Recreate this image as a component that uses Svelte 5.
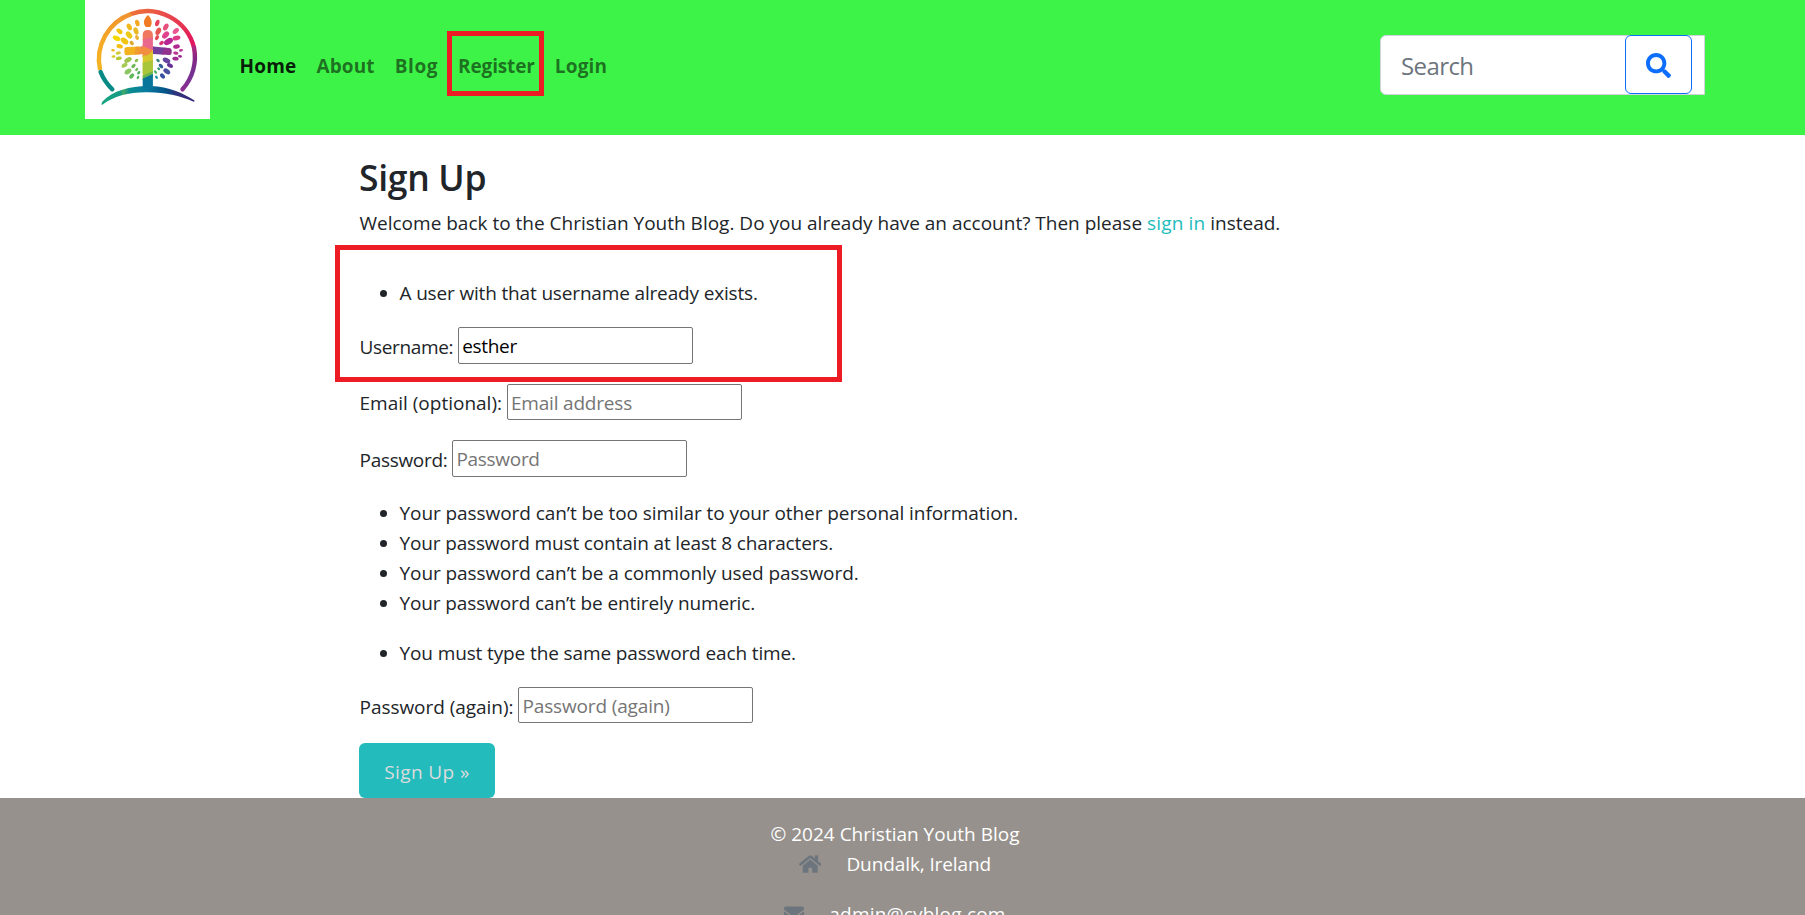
<script>
  const nav = [
    { label: 'Home', spacing: 0.2, active: true },
    { label: 'About', spacing: 0.1 },
    { label: 'Blog', spacing: 0.6 },
    { label: 'Register', spacing: -0.15, marked: true },
    { label: 'Login', spacing: 0.2 }
  ];

  const rules = [
    { text: 'Your password can’t be too similar to your other personal information.', spacing: -0.07 },
    { text: 'Your password must contain at least 8 characters.', spacing: -0.15 },
    { text: 'Your password can’t be a commonly used password.', spacing: -0.08 },
    { text: 'Your password can’t be entirely numeric.', spacing: -0.12 }
  ];

  // x, y, half-length, half-width, rotation, colour
  const leaves = [
    [52.3, 23, 3.3, 2.2, 75, '#f5a623'],
    [44.3, 27, 3.6, 2.3, 60, '#f0b81e'],
    [51, 31, 3.8, 2.4, 70, '#eab92a'],
    [34.5, 31.3, 3.4, 2.2, 40, '#f2c50c'],
    [44, 35, 4, 2.6, 50, '#edc81a'],
    [52, 37.5, 2.6, 1.8, 65, '#eeb034'],
    [31.5, 38.3, 4, 2.4, 25, '#f5d800'],
    [39.5, 41, 4.3, 2.7, 38, '#f0c414'],
    [46.7, 43, 2.4, 1.8, 45, '#dca92b'],
    [34.7, 46.3, 3.3, 2.1, 15, '#f3bd15'],
    [28, 50.3, 1.8, 1.2, 10, '#f1b722'],
    [33.3, 53, 2.6, 1.6, -10, '#cfc93a'],
    [28.5, 56.5, 2, 1.3, -5, '#d3c921'],
    [33.8, 58.3, 3, 1.8, -12, '#b5c934'],
    [43, 60, 4, 2.4, -28, '#a0c44c'],
    [51.5, 60.5, 2, 1.4, -45, '#86bd4b'],
    [39.5, 65.3, 3.2, 2, -30, '#a5cb54'],
    [48.5, 66, 2.6, 1.6, -45, '#6fb85a'],
    [43, 71.5, 3.8, 2.4, -35, '#8bc663'],
    [51.7, 69.5, 1.8, 1.3, -50, '#72bb5a'],
    [46.7, 76, 3, 1.9, -50, '#62b85d'],
    [53.8, 72.7, 1.9, 1.3, -50, '#4aaf5c'],
    [53, 77.5, 1.8, 1.2, -60, '#51b45d'],
    [72.3, 23, 3.4, 2, -70, '#e94057'],
    [80.8, 27, 3.8, 2.3, -60, '#e5507d'],
    [73.3, 31.3, 4, 2.5, -65, '#e8574f'],
    [90.8, 31, 3.6, 2.3, -42, '#ea5790'],
    [80.6, 35, 4.2, 2.7, -48, '#df438c'],
    [72, 37.7, 2.7, 1.8, -60, '#e14c56'],
    [91.5, 38, 4, 2.3, -15, '#df3a85'],
    [83.5, 41.5, 4.8, 3, -30, '#b72594'],
    [76.5, 43, 2.6, 1.9, -35, '#d83579'],
    [91.5, 46.6, 3.4, 2.1, -12, '#b32992'],
    [96, 50.3, 2, 1.3, -10, '#b8369b'],
    [90.8, 53.2, 2.6, 1.6, 8, '#bd3390'],
    [95, 56.4, 2, 1.3, 8, '#9b278f'],
    [90.5, 58.6, 3.2, 1.9, 8, '#a12a91'],
    [81.5, 60.5, 4, 2.5, 25, '#6545a0'],
    [73, 60.5, 2, 1.4, 45, '#397f81'],
    [85, 65.5, 3.2, 2, 28, '#663298'],
    [76, 66, 2.7, 1.7, 45, '#325d92'],
    [81.8, 71.4, 3.8, 2.4, 35, '#4a51a1'],
    [73.7, 68.7, 1.6, 1.2, 50, '#2c9471'],
    [70.5, 72, 2, 1.3, 50, '#4caf65'],
    [77.5, 76, 3, 2, 50, '#374fa1'],
    [71.5, 77.3, 1.9, 1.2, 55, '#1795a3']
  ];
</script>

{#snippet field(label, hint, value, type, spacing, inner)}
  <div class="field">
    <label style:letter-spacing="{spacing}px"><span>{label}</span>
      <input {type} placeholder={hint} {value} style:letter-spacing="{inner}px" />
    </label>
  </div>
{/snippet}

<header>
  <a class="logo" href="#home" aria-label="Home">
    <svg viewBox="0 0 125 119" width="125" height="119">
      <defs>
        <linearGradient id="hill" x1="17" x2="109" y1="0" y2="0" gradientUnits="userSpaceOnUse">
          <stop offset="0" stop-color="#15a57f" />
          <stop offset=".2" stop-color="#139c87" />
          <stop offset=".23" stop-color="#45aa68" />
          <stop offset=".3" stop-color="#0a8d91" />
          <stop offset=".48" stop-color="#087b9e" />
          <stop offset=".7" stop-color="#045287" />
          <stop offset=".8" stop-color="#30347c" />
          <stop offset="1" stop-color="#39277c" />
        </linearGradient>
        <linearGradient id="ring" x1="48" x2="108" y1="12" y2="44" gradientUnits="userSpaceOnUse">
          <stop offset="0" stop-color="#ed7038" />
          <stop offset=".45" stop-color="#e84a4c" />
          <stop offset=".8" stop-color="#e52d53" />
          <stop offset="1" stop-color="#e11460" />
        </linearGradient>
        <linearGradient id="side" x1="0" x2="0" y1="45" y2="90" gradientUnits="userSpaceOnUse">
          <stop offset="0" stop-color="#bb247c" />
          <stop offset=".3" stop-color="#842884" />
          <stop offset=".65" stop-color="#743293" />
          <stop offset="1" stop-color="#8b2d91" />
        </linearGradient>
        <linearGradient id="west" x1="0" x2="0" y1="12" y2="70" gradientUnits="userSpaceOnUse">
          <stop offset="0" stop-color="#ef912f" />
          <stop offset=".5" stop-color="#f5a927" />
          <stop offset="1" stop-color="#f4b51f" />
        </linearGradient>
        <clipPath id="cross">
          <path d="M57.700 35q0-5 5-5t5.200 5v11.500l16.500 1.500q2.300.2 2.300 2.300v2.400q0 2.300-2.300 2.300l-16.500-1v34H57.700V54l-15.500 1.300q-2.800.2-2.800-2.500v-3q0-2.700 2.800-2.800l15.500-.5z" />
        </clipPath>
      </defs>
      <g fill="none" stroke-width="4.400">
        <path stroke="url(#west)" d="M15.100 70A48.300 48.300 0 0 1 46.500 13.800" />
        <path stroke="url(#ring)" d="M46 14A48.300 48.300 0 0 1 109 47.500" />
        <path stroke="url(#side)" stroke-linecap="round" d="M109 47.500A48.300 48.300 0 0 1 97.500 89.300" />
        <path stroke="#078a86" stroke-linecap="round" d="M15.600 72A48.300 48.300 0 0 0 27.300 89.300" />
      </g>
      <path fill="url(#hill)" d="M17 105c-.8-.5-.5-1.800.5-3.500C28 90 47 85.500 66 86c18 .7 32 7 43.500 14.400q.4 1-.8 1.300C94 95.500 79 92 61 92.300 43 92.600 29 96 17 105z" />
      <g clip-path="url(#cross)">
        <path fill="#f3b21f" d="M38 44h16v14H38z" />
        <path fill="#f19b2f" d="M51 44h10v14H49z" />
        <path fill="#ee7960" d="M56 28h13v12H56z" />
        <path fill="#e9688c" d="m56 40 13-3v13H56z" />
        <path fill="#f28e3f" d="M52 56l6-10 11 5-6 7z" />
        <path fill="#d8c72c" d="m57 56 6-1 6-5v17l-12 7z" />
        <path fill="#a9c63b" d="m57 63 11-3v12l-11 8z" />
        <path fill="#6fb64c" d="m57 76 11-5v6l-11 3z" />
        <path fill="#08759a" d="m57 79 11-5v17H57z" />
        <path fill="#733e9b" d="M68 46h13l-3 10H68z" />
        <path fill="#93318f" d="m80 46 8 1v10H76z" />
      </g>
      <path fill="#f07b22" d="M63 15c3.500 3.500 5 8 2.200 12h-4.400c-3.500-4-1.800-8.500 2.200-12z" />
      {#each leaves as [x, y, a, b, r, c]}
        <ellipse cx={x} cy={y} rx={a} ry={b} fill={c} transform="rotate({r} {x} {y})" />
      {/each}
    </svg>
  </a>
  <nav>
    {#each nav as item}
      <a href="#{item.label}" class:active={item.active} class:marked={item.marked} style:letter-spacing="{item.spacing}px">{item.label}</a>
    {/each}
  </nav>
  <form class="search">
    <input type="text" placeholder="Search" />
    <button type="button" aria-label="Search">
      <svg viewBox="0 0 512 512" width="25" height="25"><path fill="currentColor" d="M505 442.700L405.300 343c-4.500-4.500-10.600-7-17-7H372c27.600-35.300 44-79.700 44-128C416 93.100 322.900 0 208 0S0 93.100 0 208s93.100 208 208 208c48.300 0 92.700-16.400 128-44v16.300c0 6.400 2.500 12.500 7 17l99.700 99.700c9.400 9.400 24.600 9.400 33.900 0l28.300-28.300c9.400-9.400 9.400-24.600.1-34zM208 336c-70.700 0-128-57.200-128-128 0-70.700 57.200-128 128-128 70.700 0 128 57.200 128 128 0 70.700-57.200 128-128 128z" /></svg>
    </button>
  </form>
</header>

<main>
  <h2>Sign Up</h2>
  <p>Welcome back to the Christian Youth Blog. Do you already have an account? Then please <a href="#signin">sign in</a> instead.</p>
  <div class="problem">
    <ul class="error"><li>A user with that username already exists.</li></ul>
    {@render field('Username:', '', 'esther', 'text', -0.35, -0.3)}
  </div>
  {@render field('Email (optional):', 'Email address', '', 'email', 0, -0.2)}
  {@render field('Password:', 'Password', '', 'password', -0.3, -0.3)}
  <ul>
    {#each rules as rule}
      <li style:letter-spacing="{rule.spacing}px">{rule.text}</li>
    {/each}
  </ul>
  <ul><li>You must type the same password each time.</li></ul>
  {@render field('Password (again):', 'Password (again)', '', 'password', -0.04, -0.15)}
  <button class="submit" type="button">Sign Up »</button>
</main>

<footer>
  <div>© 2024 Christian Youth Blog</div>
  <div class="contact">
    <svg viewBox="0 0 576 512" width="22.500" height="20"><path fill="currentColor" d="M280.370 148.260L96 300.110V464a16 16 0 0 0 16 16l112.060-.290a16 16 0 0 0 15.920-16V368a16 16 0 0 1 16-16h64a16 16 0 0 1 16 16v95.640a16 16 0 0 0 16 16.050L464 480a16 16 0 0 0 16-16V300L295.670 148.260a12.190 12.190 0 0 0-15.300 0zM571.600 251.470L488 182.560V44.050a12 12 0 0 0-12-12h-56a12 12 0 0 0-12 12v72.610L318.470 43a48 48 0 0 0-61 0L4.340 251.470a12 12 0 0 0-1.600 16.900l25.500 31A12 12 0 0 0 45.150 301l235.220-193.740a12.190 12.190 0 0 1 15.300 0L530.900 301a12 12 0 0 0 16.900-1.600l25.500-31a12 12 0 0 0-1.700-16.930z" /></svg>
    <span>Dundalk, Ireland</span>
  </div>
  <div class="contact mail">
    <svg viewBox="0 0 512 512" width="20" height="20"><path fill="currentColor" d="M502.300 190.800c3.900-3.100 9.700-.2 9.700 4.700V400c0 26.500-21.500 48-48 48H48c-26.500 0-48-21.500-48-48V195.600c0-5 5.700-7.800 9.700-4.700 22.400 17.400 52.100 39.500 154.100 113.600 21.100 15.400 56.700 47.800 92.200 47.600 35.700.3 72-32.800 92.300-47.600 102-74.100 131.600-96.300 154-113.700zM256 320c23.200.4 56.600-29.200 73.400-41.400 132.700-96.300 142.800-104.700 173.400-128.700 5.800-4.500 9.200-11.500 9.200-18.900v-19c0-26.500-21.500-48-48-48H48c-26.500 0-48 21.500-48 48v19c0 7.400 3.400 14.300 9.200 18.900 30.600 23.900 40.700 32.400 173.400 128.700 16.800 12.200 50.200 41.800 73.400 41.400z" /></svg>
    <span>admin@cyblog.com</span>
  </div>
</footer>

<style>
  :global(body) {
    height: 915px;
    overflow: hidden;
    background: #fff;
  }
  :global(#app) {
    font: 19px/30px 'Open Sans', 'Noto Sans', sans-serif;
    color: #212529;
    height: 915px;
    overflow: hidden;
  }
  a {
    text-decoration: none;
  }
  header {
    box-sizing: border-box;
    height: 135px;
    padding: 0 100px 0 85px;
    display: flex;
    align-items: flex-start;
    background: #3ef347;
  }
  .logo {
    width: 125px;
    height: 119px;
    background: #fff;
  }
  .logo svg {
    display: block;
  }
  nav {
    display: flex;
    gap: 20px;
    padding: 51px 0 0 29.500px;
  }
  nav a {
    position: relative;
    font-weight: 700;
    color: rgba(0, 0, 0, 0.55);
  }
  nav a.active {
    color: rgba(0, 0, 0, 0.9);
  }
  .marked::after {
    content: '';
    position: absolute;
    inset: -20px -9px -15px -11px;
    border: 5px solid #ed1c24;
  }
  .search {
    box-sizing: border-box;
    width: 325px;
    height: 60px;
    margin: 35px 0 0 auto;
    padding-right: 12px;
    display: flex;
    background: #fff;
    border: 1px solid #ced4da;
    border-radius: 6px 0 0 6px;
  }
  .search input {
    flex: 1;
    min-width: 0;
    border: 0;
    padding: 0 0 0 20px;
    background: none;
    font: 24px 'Open Sans', sans-serif;
    letter-spacing: -0.6px;
  }
  .search input::placeholder {
    color: #6c757d;
  }
  .search button {
    width: 67px;
    height: 59px;
    margin-top: -1px;
    padding: 2px 0 0;
    display: grid;
    place-items: center;
    color: #0d6efd;
    background: #fff;
    border: 1px solid #0d6efd;
    border-radius: 6px;
  }
  .search svg {
    display: block;
  }
  main {
    padding: 21px 0 0 359px;
  }
  h2 {
    margin: 0 0 9px;
    font-size: 35.500px;
    line-height: 43px;
    font-weight: 550;
    letter-spacing: -0.3px;
  }
  p {
    margin: 0 0 19px;
    padding-left: 0.500px;
  }
  p a {
    color: #23bbbb;
    letter-spacing: 0.15px;
  }
  ul {
    margin: 0 0 20px;
    padding-left: 40.500px;
    letter-spacing: -0.12px;
  }
  li {
    position: relative;
    top: 1px;
  }
  .problem {
    position: relative;
    padding-top: 20px;
  }
  .problem::after {
    content: '';
    position: absolute;
    left: -24px;
    top: -12px;
    width: 497px;
    height: 127px;
    border: 5px solid #ed1c24;
  }
  .error {
    letter-spacing: -0.16px;
  }
  .field {
    height: 36.600px;
    margin-bottom: 20px;
  }
  .field label {
    display: flex;
    align-items: center;
    gap: 5px;
  }
  .field span {
    padding: 3px 0 0 0.500px;
  }
  .field input {
    box-sizing: border-box;
    width: 235px;
    height: 36.600px;
    margin: 0 0 0 -0.500px;
    padding: 3px 4px 1px 3.500px;
    border: 1px solid #767676;
    border-radius: 2px;
    background: #fff;
    color: #000;
    font: 19px 'Open Sans', sans-serif;
  }
  .field input::placeholder {
    color: #757575;
  }
  .submit {
    display: block;
    width: 136px;
    height: 55px;
    padding: 2px 0 0;
    border: 0;
    border-radius: 6px;
    background: #24bbbd;
    color: #dcdcdc;
    font: 19px 'Open Sans', sans-serif;
    letter-spacing: 0.4px;
  }
  footer {
    height: 96px;
    padding: 21px 15px 0 0;
    background: #96918c;
    color: #fff;
    text-align: center;
  }
  .contact {
    display: flex;
    justify-content: center;
    align-items: center;
    gap: 25px;
    height: 30px;
  }
  .contact svg {
    color: #6c757d;
  }
  .contact span {
    letter-spacing: -0.1px;
  }
  .mail {
    margin-top: 20px;
  }
  .mail span {
    letter-spacing: 0.2px;
  }
</style>
